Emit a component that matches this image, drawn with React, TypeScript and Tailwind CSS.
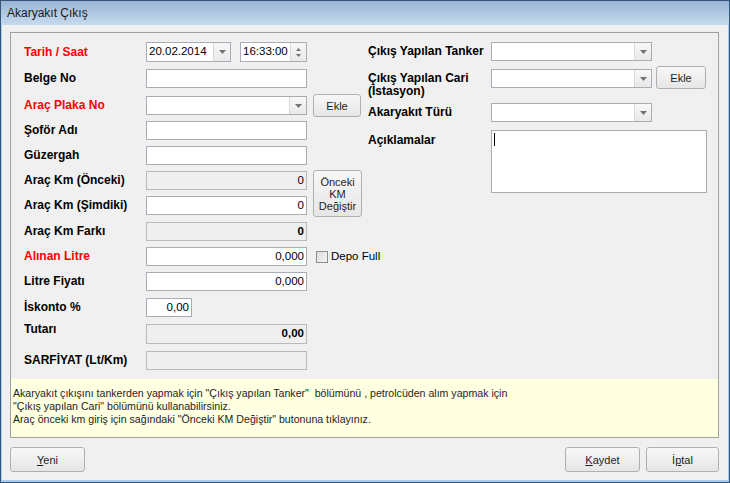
import React from "react";

const FONT = "font-['Liberation_Sans',Arial,sans-serif]";

function DropBtn() {
  return (
    <div className="flex h-full w-[17px] shrink-0 items-center justify-center border-l border-[#d9d9d9] bg-gradient-to-b from-[#f8f8f8] to-[#e9e9e9]">
      <svg width="7" height="4" viewBox="0 0 7 4">
        <path d="M0 0h7L3.5 4z" fill="#727272" />
      </svg>
    </div>
  );
}

function SpinBtn() {
  return (
    <div className="flex h-full w-[16px] shrink-0 flex-col items-center justify-center gap-[3px] border-l border-[#d9d9d9] bg-gradient-to-b from-[#f8f8f8] to-[#e9e9e9]">
      <svg width="5" height="3" viewBox="0 0 5 3">
        <path d="M2.5 0L5 3H0z" fill="#727272" />
      </svg>
      <svg width="5" height="3" viewBox="0 0 5 3">
        <path d="M0 0h5L2.5 3z" fill="#727272" />
      </svg>
    </div>
  );
}

type FieldProps = {
  className: string;
  value?: string;
  disabled?: boolean;
  right?: boolean;
  bold?: boolean;
  drop?: boolean;
  spin?: boolean;
};

function Field({ className, value, disabled, right, bold, drop, spin }: FieldProps) {
  return (
    <div
      className={
        "flex shrink-0 items-center border " +
        (disabled ? "border-[#b9b9b9] bg-[#efefef] " : "border-[#a7adb6] bg-white ") +
        className
      }
    >
      <div
        className={
          "flex h-full flex-1 items-center px-[2px] text-[11.5px] leading-none text-black " +
          (right ? "justify-end " : "justify-start ") +
          (bold ? "font-bold" : "font-normal")
        }
      >
        {value}
      </div>
      {drop && <DropBtn />}
      {spin && <SpinBtn />}
    </div>
  );
}

function Label({ children, red, className = "" }: { children: React.ReactNode; red?: boolean; className?: string }) {
  return (
    <div
      className={
        "shrink-0 text-[12px] font-bold leading-[13px] " +
        (red ? "text-[#ff0000] " : "text-black ") +
        className
      }
    >
      {children}
    </div>
  );
}

function Btn({ children, className }: { children: React.ReactNode; className: string }) {
  return (
    <div
      className={
        "flex shrink-0 items-center justify-center rounded-[3px] border border-[#b0b0b0] bg-gradient-to-b from-[#f7f7f7] to-[#e6e6e6] text-center text-[11px] leading-[12px] text-[#1e1e1e] " +
        className
      }
    >
      {children}
    </div>
  );
}

export default function App() {
  return (
    <div className={"flex h-[483px] w-[730px] flex-col border border-[#34567a] bg-[#f0f0f0] " + FONT}>
      {/* title bar */}
      <div className="flex h-[24px] shrink-0 items-center bg-gradient-to-b from-[#9ab6d5] to-[#c5daee] pl-[6px] text-[12px] text-[#1a1a1a]">
        Akaryakıt Çıkış
      </div>

      {/* body */}
      <div className="flex flex-1 flex-col border-x border-b-2 border-[#a9cdeb] bg-[#f0f0f0]">
        {/* main panel */}
        <div className="ml-[8px] mt-[7px] flex h-[406px] w-[709px] flex-col border border-[#a0a0a0]">
          <div className="flex flex-1 pl-[13px]">
            {/* left column */}
            <div className="flex w-[344px] shrink-0 flex-col">
              <div className="mt-[9px] flex h-[20px] items-center">
                <Label red className="w-[122px]">Tarih / Saat</Label>
                <Field className="h-[20px] w-[85px]" value="20.02.2014" drop />
                <Field className="ml-[9px] h-[20px] w-[67px]" value="16:33:00" spin />
              </div>
              <div className="mt-[7px] flex h-[19px] items-center">
                <Label className="w-[122px]">Belge No</Label>
                <Field className="h-[19px] w-[161px]" />
              </div>
              <div className="mt-[8px] flex h-[19px] items-center">
                <Label red className="w-[122px]">Araç Plaka No</Label>
                <Field className="h-[19px] w-[161px]" drop />
                <Btn className="ml-[6px] h-[23px] w-[48px]">Ekle</Btn>
              </div>
              <div className="mt-[6px] flex h-[19px] items-center">
                <Label className="w-[122px]">Şoför Adı</Label>
                <Field className="h-[19px] w-[161px]" />
              </div>
              <div className="mt-[6px] flex h-[19px] items-center">
                <Label className="w-[122px]">Güzergah</Label>
                <Field className="h-[19px] w-[161px]" />
              </div>
              <div className="mt-[6px] flex h-[19px] items-start">
                <Label className="mt-[3px] w-[122px]">Araç Km (Önceki)</Label>
                <Field className="h-[19px] w-[161px]" value="0" right disabled />
                <Btn className="-mt-px ml-[6px] h-[47px] w-[49px] flex-col">
                  <span>Önceki</span>
                  <span>KM</span>
                  <span>Değiştir</span>
                </Btn>
              </div>
              <div className="mt-[6px] flex h-[19px] items-center">
                <Label className="w-[122px]">Araç Km (Şimdiki)</Label>
                <Field className="h-[19px] w-[161px]" value="0" right />
              </div>
              <div className="mt-[7px] flex h-[19px] items-center">
                <Label className="w-[122px]">Araç Km Farkı</Label>
                <Field className="h-[19px] w-[161px]" value="0" right bold disabled />
              </div>
              <div className="mt-[6px] flex h-[19px] items-center">
                <Label red className="w-[122px]">Alınan Litre</Label>
                <Field className="h-[19px] w-[161px]" value="0,000" right />
                <div className="ml-[9px] h-[12px] w-[12px] shrink-0 border border-[#8e8f8f] bg-gradient-to-br from-[#dcdcdc] to-[#f4f4f4]" />
                <span className="ml-[3px] shrink-0 whitespace-nowrap text-[11.5px] text-black">Depo Full</span>
              </div>
              <div className="mt-[6px] flex h-[19px] items-center">
                <Label className="w-[122px]">Litre Fiyatı</Label>
                <Field className="h-[19px] w-[161px]" value="0,000" right />
              </div>
              <div className="mt-[7px] flex h-[19px] items-center">
                <Label className="w-[122px]">İskonto %</Label>
                <Field className="h-[19px] w-[46px]" value="0,00" right />
              </div>
              <div className="mt-[7px] flex h-[19px] items-start">
                <Label className="mt-[-1px] w-[122px]">Tutarı</Label>
                <Field className="h-[20px] w-[161px]" value="0,00" right bold disabled />
              </div>
              <div className="mt-[8px] flex h-[19px] items-center">
                <Label className="w-[122px]">SARFİYAT (Lt/Km)</Label>
                <Field className="h-[19px] w-[161px]" disabled />
              </div>
            </div>

            {/* right column */}
            <div className="flex flex-col">
              <div className="mt-[9px] flex h-[19px] items-center">
                <Label className="w-[123px]">Çıkış Yapılan Tanker</Label>
                <Field className="h-[19px] w-[161px]" drop />
              </div>
              <div className="mt-[8px] flex h-[19px] items-start">
                <Label className="mt-[3px] w-[123px] leading-[12px]">
                  Çıkış Yapılan Cari
                  <br />
                  (İstasyon)
                </Label>
                <Field className="h-[19px] w-[161px]" drop />
                <Btn className="-mt-[3px] ml-[4px] h-[23px] w-[50px]">Ekle</Btn>
              </div>
              <div className="mt-[15px] flex h-[19px] items-center">
                <Label className="w-[123px]">Akaryakıt Türü</Label>
                <Field className="h-[19px] w-[161px]" drop />
              </div>
              <div className="mt-[8px] flex items-start">
                <Label className="mt-[4px] w-[123px]">Açıklamalar</Label>
                <div className="h-[63px] w-[216px] border border-[#a7adb6] bg-white pl-[2px] pt-[2px]">
                  <div className="h-[13px] w-px bg-black" />
                </div>
              </div>
            </div>
          </div>

          {/* note */}
          <div className="h-[58px] shrink-0 bg-[#ffffe1] pl-[2px] pt-[8px] text-[10.6px] leading-[13px] text-[#1e1e1e]">
            <div>Akaryakıt çıkışını tankerden yapmak için "Çıkış yapılan Tanker"&nbsp; bölümünü , petrolcüden alım yapmak için</div>
            <div>"Çıkış yapılan Cari" bölümünü kullanabilirsiniz.</div>
            <div>Araç önceki km giriş için sağındaki "Önceki KM Değiştir" butonuna tıklayınız.</div>
          </div>
        </div>

        {/* footer */}
        <div className="ml-[8px] mt-[9px] flex w-[709px] items-center">
          <Btn className="h-[25px] w-[75px]">
            <span>
              <span className="underline">Y</span>eni
            </span>
          </Btn>
          <div className="flex-1" />
          <Btn className="h-[25px] w-[75px]">
            <span>
              <span className="underline">K</span>aydet
            </span>
          </Btn>
          <Btn className="ml-[6px] h-[25px] w-[73px]">
            <span>
              İ<span className="underline">p</span>tal
            </span>
          </Btn>
        </div>
      </div>
    </div>
  );
}
